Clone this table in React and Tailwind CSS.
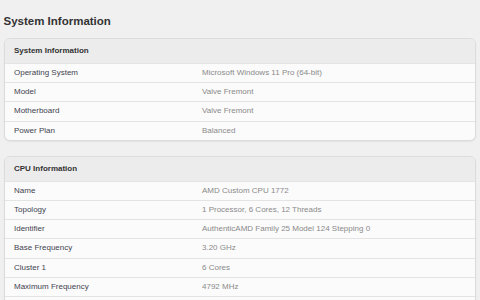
import React from "react";

const sections = [
  {
    title: "System Information",
    rows: [
      ["Operating System", "Microsoft Windows 11 Pro (64-bit)"],
      ["Model", "Valve Fremont"],
      ["Motherboard", "Valve Fremont"],
      ["Power Plan", "Balanced"],
    ],
  },
  {
    title: "CPU Information",
    rows: [
      ["Name", "AMD Custom CPU 1772"],
      ["Topology", "1 Processor, 6 Cores, 12 Threads"],
      ["Identifier", "AuthenticAMD Family 25 Model 124 Stepping 0"],
      ["Base Frequency", "3.20 GHz"],
      ["Cluster 1", "6 Cores"],
      ["Maximum Frequency", "4792 MHz"],
      ["", ""],
    ],
  },
];

export default function App() {
  return (
    <div
      className="w-[480px] h-[300px] overflow-hidden bg-[#f0f0f0] px-[4px] pt-[13px]"
      style={{ fontFamily: '"Liberation Sans", Arial, sans-serif' }}
    >
      <h1 className="text-[11.5px] leading-[16px] font-bold text-[#333333] -ml-[0.5px]">
        System Information
      </h1>
      <div className="mt-[9px] flex flex-col gap-[15px]">
        {sections.map((s) => (
          <div
            key={s.title}
            className="rounded-[6px] border border-[#dcdcdc] bg-[#fbfbfb] overflow-hidden shadow-[0_1px_2px_rgba(0,0,0,0.06)]"
          >
            <div className="h-[24px] bg-[#ececec] flex items-center pl-[9px] text-[8px] font-bold text-[#333333]">
              {s.title}
            </div>
            {s.rows.map(([k, v], i) => (
              <div
                key={i}
                className="h-[19.2px] border-t border-[#e4e4e4] flex items-center pl-[9px] text-[8px]"
              >
                <div className="w-[188px] text-[#3f4350]">{k}</div>
                <div className="text-[#8a8a8a]">{v}</div>
              </div>
            ))}
          </div>
        ))}
      </div>
    </div>
  );
}
